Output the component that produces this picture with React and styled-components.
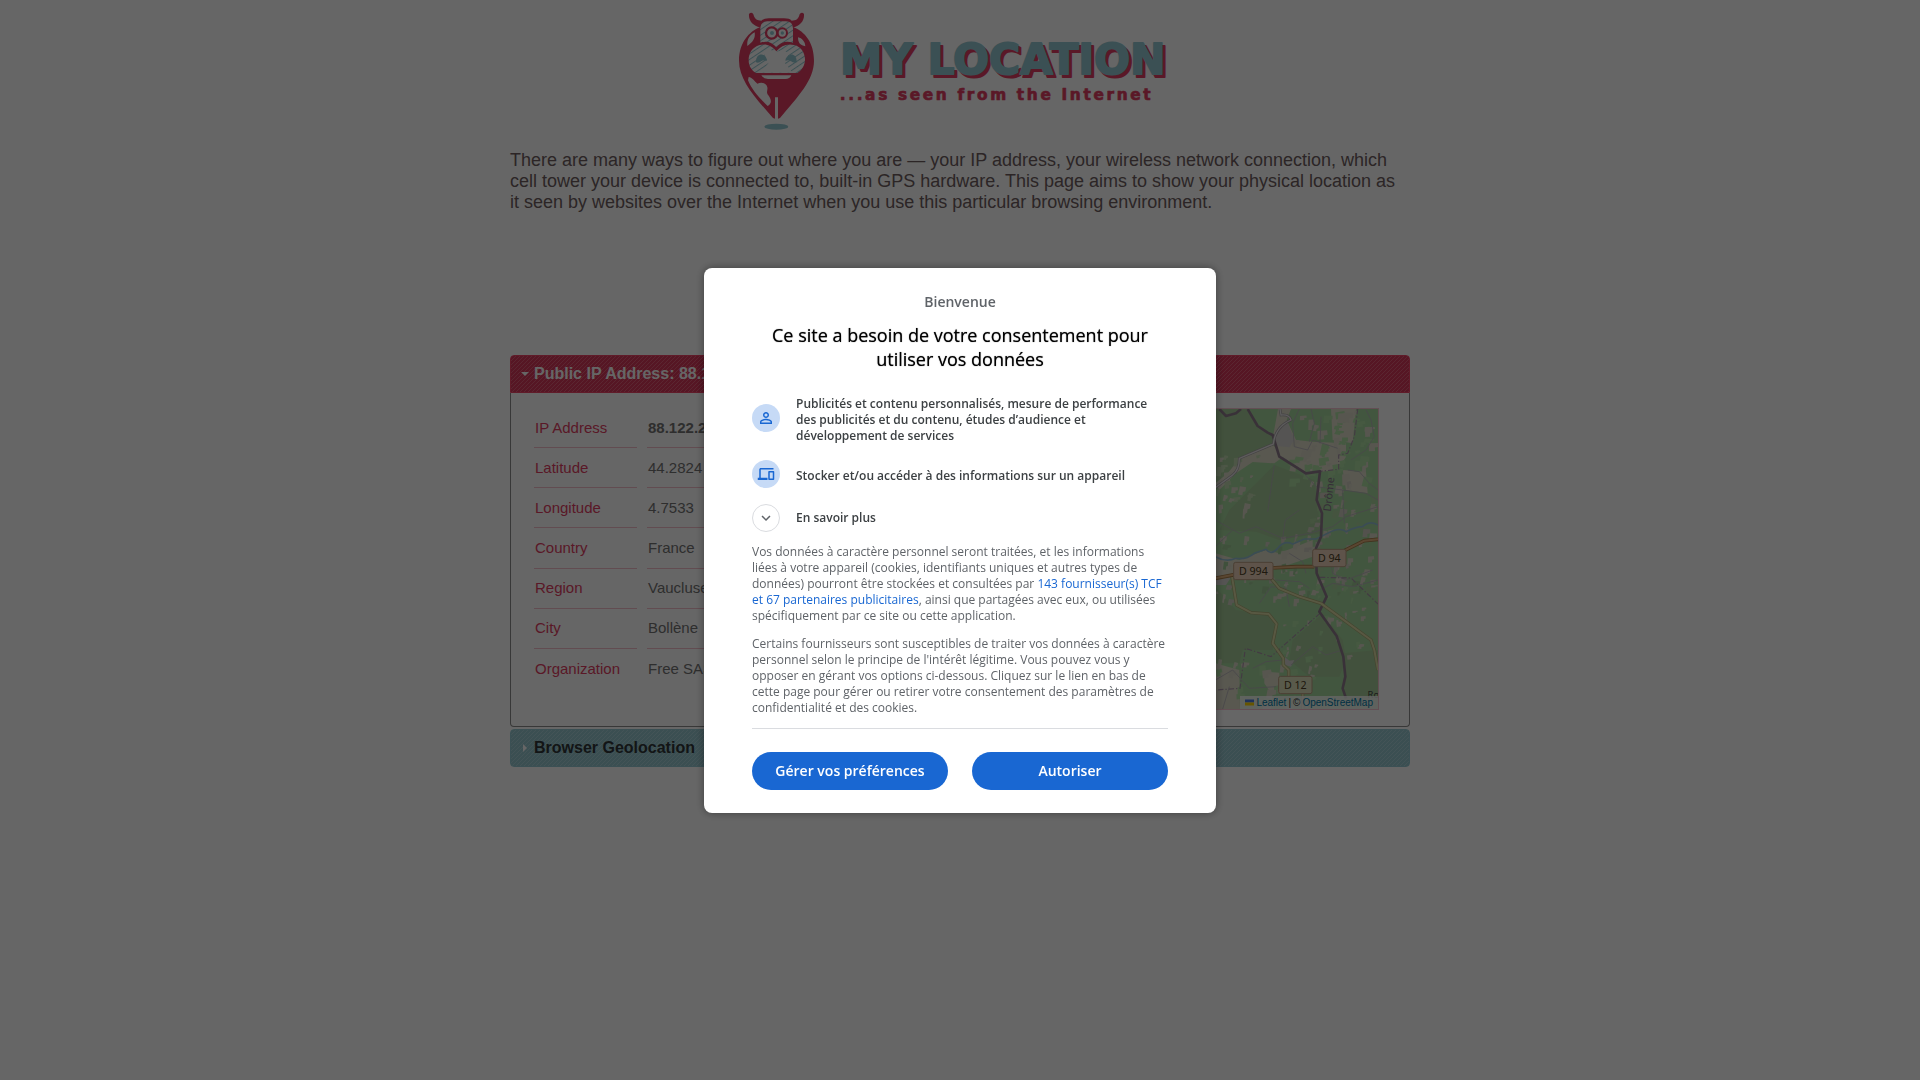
import React from 'react';
import styled, { createGlobalStyle } from 'styled-components';

const GlobalStyle = createGlobalStyle`
  *, *::before, *::after { box-sizing: border-box; }
  body {
    margin: 0;
    background: #fff;
    color: #735f61;
    font-family: "Liberation Sans", Arial, sans-serif;
  }
`;

const red = '#e03e62';
const teal = '#94c9d2';

const Page = styled.main`
  max-width: 900px;
  margin: 0 auto;
`;

const Header = styled.header`
  display: flex;
  justify-content: center;
`;

const LogoSvg = styled.svg`
  display: block;
  width: 442px;
  height: 140px;
`;

const Intro = styled.p`
  margin: 10px 0 142px;
  padding-right: 8px;
  color: #6e5e60;
  font-size: 18px;
  line-height: 21px;
`;

const stripes = (line, base) =>
  `linear-gradient(135deg, ${line} 0 12.5%, ${base} 12.5% 50%, ${line} 50% 62.5%, ${base} 62.5%) 0 0 / 4px 4px`;

const SectionTitle = styled.h3`
  margin: ${(p) => (p.$open ? '0' : '2px 0 0')};
  border: 1px solid ${(p) => (p.$open ? '#f04467' : '#94c9d2')};
  border-radius: ${(p) => (p.$open ? '4px 4px 0 0' : '4px')};
  background: ${(p) => (p.$open ? stripes('#e3607c', '#d8375a') : stripes('#aad2da', '#94c5cd'))};
`;

const SectionButton = styled.button`
  display: flex;
  align-items: center;
  gap: 5px;
  width: 100%;
  height: 36px;
  padding: 0 10px;
  border: 0;
  background: none;
  color: ${(p) => (p.$open ? '#fff' : '#303638')};
  font: bold 16px/20px "Liberation Sans", Arial, sans-serif;
  text-align: left;
`;

const Arrow = styled.svg`
  width: 8px;
  height: 8px;
  fill: #fff;
`;

const Panel = styled.div`
  display: flex;
  justify-content: space-between;
  align-items: flex-start;
  padding: 15px 30px 16px 13px;
  border: 1px solid #8c8c8c;
  border-top: 0;
  border-radius: 0 0 4px 4px;
`;

const Facts = styled.table`
  height: 281px;
  border-collapse: separate;
  border-spacing: 10px 0;
  font-size: 15px;
  line-height: 20px;

  th, td {
    height: 40px;
    padding: 0 1px;
    border-bottom: 1px solid #f5bfca;
    text-align: left;
    font-weight: normal;
  }
  th { width: 103px; color: ${red}; }
  td { width: 200px; color: #737373; }
  tr:first-child td { font-weight: bold; }
  tr:last-child th, tr:last-child td { border-bottom: 0; }
`;

const MapFrame = styled.figure`
  position: relative;
  flex: none;
  margin: 0;
  border: 1px solid #f5c3cf;
`;

const MapSvg = styled.svg`
  display: block;
  width: 400px;
  height: 300px;
`;

const Attribution = styled.figcaption`
  position: absolute;
  right: 0;
  bottom: 0;
  display: flex;
  align-items: center;
  gap: 2px;
  padding: 0 5px;
  background: rgba(255, 255, 255, 0.8);
  color: #333;
  font-size: 10px;
  line-height: 13px;

  a { color: #0078a8; text-decoration: none; }
  svg { width: 9px; height: 7px; }
`;

const Backdrop = styled.div`
  position: fixed;
  inset: 0;
  display: flex;
  align-items: center;
  justify-content: center;
  background: rgba(0, 0, 0, 0.6);
`;

const Dialog = styled.section`
  width: 512px;
  padding: 23px 48px;
  border-radius: 8px;
  background: #fff;
  box-shadow: 0 0 8px rgba(0, 0, 0, 0.4);
  color: #5f6368;
  font-family: "Open Sans", sans-serif;
`;

const Welcome = styled.p`
  margin: 0 0 10px;
  font-size: 14px;
  font-weight: 600;
  line-height: 22px;
  text-align: center;
`;

const DialogTitle = styled.h1`
  margin: 0 0 21px;
  color: #000;
  font-size: 18px;
  font-weight: 500;
  line-height: 24px;
  text-align: center;
  text-shadow: 0 0 1px rgba(0, 0, 0, 0.7);
`;

const Purposes = styled.ul`
  display: flex;
  flex-direction: column;
  gap: 16px;
  margin: 0 0 12px;
  padding: 0;
  list-style: none;
`;

const Purpose = styled.li`
  display: flex;
  align-items: center;
  gap: 16px;
`;

const PurposeText = styled.span`
  padding-top: ${(p) => (p.$plain ? '0' : '4px')};
  color: #3c4043;
  font-size: 12px;
  font-weight: 600;
  line-height: 16px;
`;

const IconDisc = styled.span`
  display: flex;
  align-items: center;
  justify-content: center;
  flex: none;
  width: 28px;
  height: 28px;
  border-radius: 50%;
  background: #c6daf6;

  svg { width: 18px; height: 18px; fill: #1967d2; }
`;

const MoreButton = styled.button`
  display: flex;
  align-items: center;
  gap: 16px;
  padding: 0;
  border: 0;
  background: none;
  font-family: inherit;
`;

const ChevronDisc = styled(IconDisc)`
  border: 1px solid #dadce0;
  background: #fff;

  svg { fill: #5f6368; }
`;

const Legal = styled.p`
  margin: 0 0 12px;
  font-size: 12px;
  line-height: 16px;

  a { color: #1967d2; text-decoration: none; }
`;

const Actions = styled.div`
  display: grid;
  grid-template-columns: 1fr 1fr;
  gap: 24px;
  padding-top: 23px;
  border-top: 1px solid #dadce0;
`;

const ActionButton = styled.button`
  height: 38px;
  padding: 0;
  border: 0;
  border-radius: 19px;
  background: #1967d2;
  color: #fff;
  font: 600 14px/20px "Open Sans", sans-serif;
`;

function Logo() {
  return (
    <LogoSvg viewBox="57 0 1326 420" role="img" aria-label="My Location">
      <defs>
        <pattern id="hatch" width="14" height="14" patternUnits="userSpaceOnUse" patternTransform="rotate(-34)">
          <rect width="14" height="14" fill="#fff" />
          <rect width="14" height="3" fill={teal} />
        </pattern>
      </defs>
      <path fill={red} d="M57 182 C57 128 88 94 120 82 C100 78 85 62 87 42 C92 36 100 38 101 46 C105 58 112 62 124 62 Q132 54 150 55 H188 Q208 54 215 62 C228 62 234 58 238 46 C239 38 248 36 252 42 C254 62 240 78 220 82 C254 94 282 128 282 182 C282 240 235 288 180 354 L174 356 V292 H165 V356 L159 354 C105 292 57 240 57 182Z" />
      <path fill="#fff" d="M104 97 C106 112 102 124 82 138 C80 120 88 106 104 97Z M234 112 C246 114 256 126 256 139 C242 136 234 130 234 112Z" />
      <path fill="url(#hatch)" d="M121 128 V85 Q122 64 142 64 H198 Q218 64 219 85 V128 Q188 118 169 142 Q150 118 121 128Z" />
      <path fill="url(#hatch)" d="M169 154 C156 136 137 130 119 135 C96 142 86 160 86 180 C86 200 96 212 108 219 H232 C246 211 255 196 255 178 C255 156 240 138 222 135 C201 130 183 137 169 154Z" />
      <path fill="#fff" d="M169 156 L150 149 L131 160 L146 188 L124 218 H218 L194 188 L207 160 L188 149Z" />
      <circle cx="155" cy="99" r="17" fill="#fff" stroke={red} strokeWidth="7" />
      <circle cx="187" cy="99" r="14" fill="#fff" stroke={red} strokeWidth="6" />
      <circle cx="156" cy="99" r="6" fill={teal} />
      <circle cx="187" cy="99" r="5" fill={teal} />
      <path fill={teal} d="M108 187 C107 170 117 161 128 164 C137 167 141 174 140 183 Q130 178 124 184 Q116 190 108 187Z M230 187 C231 171 222 162 211 164 C202 167 196 174 196 182 Q207 178 213 184 Q221 190 230 187Z" />
      <path fill="#fff" d="M124 226 H214 Q210 237 196 237 H144 Q130 237 124 226Z" />
      <path fill="#fff" d="M86 231 C96 232 102 242 112 251 C126 244 140 250 142 262 C144 270 137 276 145 286 C153 296 158 310 143 318 C120 296 94 268 84 241Z" />
      <ellipse cx="169" cy="380" rx="36" ry="9" fill={teal} />
      <g fontFamily='"DejaVu Sans", sans-serif' fontWeight="bold" fontSize="127" strokeWidth="6" strokeLinejoin="round">
        <text x="369" y="231" fill={red} stroke={red}>MY LOCATION</text>
        <text x="360" y="222" fill={teal} stroke={teal}>MY LOCATION</text>
      </g>
      <text x="359" y="299" fill={red} stroke={red} strokeWidth="2" strokeLinejoin="round" fontFamily='"DejaVu Sans", sans-serif' fontWeight="bold" fontSize="46" letterSpacing="8">
        ...as seen from the Internet
      </text>
    </LogoSvg>
  );
}

/* Deterministic scatter of small fields over the woodland */
function makeFields(count, seed, colors, x0, y0, w, h, size) {
  let s = seed;
  const rnd = () => {
    s = (s * 16807) % 2147483647;
    return s / 2147483647;
  };
  return Array.from({ length: count }, () => {
    const x = x0 + rnd() * w;
    const y = y0 + rnd() * h;
    const a = size * (0.4 + rnd());
    const b = size * (0.3 + rnd());
    const k = (rnd() - 0.5) * size;
    return {
      d: `M${x} ${y}l${a} ${-k * 0.4}l${k * 0.3} ${b * 0.6}l${-a * 0.4} ${b * 0.1}l${k * 0.2} ${b * 0.5}l${-a * 0.7} ${k * 0.3}Z`,
      fill: colors[Math.floor(rnd() * colors.length)],
    };
  });
}

const fields = [
  ...makeFields(60, 71, ['#aedfa3', '#d9d8c6'], 260, 210, 250, 220, 22),
  ...makeFields(60, 991, ['#d9d8c6', '#cfccc0', '#add19e'], 330, 420, 190, 330, 16),
  ...makeFields(70, 37, ['#d9d8c6', '#cfccc0', '#9fc795'], -200, 560, 710, 220, 17),
  ...makeFields(36, 555, ['#d9d8c6', '#aedfa3'], 230, 730, 290, 250, 14),
  ...makeFields(30, 404, ['#d9d8c6', '#aedfa3'], 48, 950, 300, 150, 20),
  ...makeFields(22, 8080, ['#d9d8c6', '#c0d8b0'], 50, 330, 120, 200, 18),
];

const roadLabels = [
  { x: 103, y: 667, w: 118, text: 'D 994', fill: '#ead0b8' },
  { x: 340, y: 628, w: 100, text: 'D 94', fill: '#ead0b8' },
  { x: 238, y: 1009, w: 100, text: 'D 12', fill: '#dfe2bc' },
];

function LocationMap() {
  return (
    <MapFrame>
      <MapSvg viewBox="-664 207 1200 900" role="img" aria-label="Map of the area around Bollène">
        <rect x="-664" y="207" width="1200" height="900" fill="#a6d79d" />
        <path fill="#a5cb98" d="M-664 207H140L175 260L222 285L232 320L125 350L90 400L48 440H-664Z M225 375L345 420L355 500L365 580L240 600L170 575L60 570L90 510L150 450Z M48 740L110 810L220 830L232 880L220 930L130 930L120 970L48 970Z M280 900L370 820L430 900L440 960L420 1010L330 1010L270 960Z M430 940L536 930V1107H440Z" />
        <path fill="#dedbc9" d="M236 207H275L262 240L290 300L340 305L440 310L440 350L415 390L362 395L320 400L275 375L240 345L222 285Z M395 207H470L460 310L400 300Z M125 350L222 315L250 352L225 370L160 366L110 400L60 450L48 430L85 400Z M48 640L120 660L200 630L240 640L340 600L340 650L220 690L48 710Z M430 390L500 395L505 460L440 450Z M195 995L240 998L240 1060L215 1060L195 1030Z M48 970L120 990L122 1107H48Z" />
        {fields.map((f, i) => (
          <path key={i} d={f.d} fill={f.fill} />
        ))}
        <path fill="#d5d1cf" d="M222 285L262 240L285 300L270 322L235 318Z M255 950L270 962L285 960L275 980L258 975Z M48 715L95 712L80 735L48 735Z" />
        <g fill="none" stroke="#b5b1b8" strokeWidth="2.5">
          <path d="M335 207L345 250L330 305M365 230L362 310M300 207L280 250L285 320L325 330L340 300L415 325M250 352L300 385L350 440L430 450L435 550M430 450L500 460L536 480M455 360L500 330L525 290L515 240L500 210" />
          <path d="M48 540L120 580L170 560L250 595L330 580L400 560L440 530L536 500M48 620L100 570M205 515L225 375M250 595L258 540L300 510M445 390L480 395L510 430L536 450" />
          <path d="M230 720L300 725L330 745M360 750L400 730L460 740L536 720M275 975L340 920L380 945L430 930M270 640L310 665L320 700M390 640L400 700L440 720L520 690M180 790L215 740L260 745L270 800" />
          <path d="M48 1020L100 990L150 1045L230 1040M70 1107L90 1040M160 985L200 965L250 960" />
        </g>
        <g fill="none" stroke="#a792a7" strokeWidth="3.5" strokeDasharray="16 6 4 6">
          <path d="M475 207L465 290L445 340L418 345V388L362 394M362 712L455 714L536 792M362 820L215 950L138 925L122 1045L48 1050" />
        </g>
        <path fill="none" stroke="#94bfd2" strokeWidth="5" d="M-200 620L48 650Q80 668 110 655Q140 660 165 640L200 628Q215 648 235 625Q255 600 280 612L315 597L350 597L385 580Q420 560 440 575Q470 560 490 560Q510 540 536 555" />
        <path fill="none" stroke="#8f7c8c" strokeWidth="8" strokeLinejoin="round" d="M60 207L80 228L110 220L125 207M145 207L175 258L205 278L220 285L240 350L320 400L362 394L352 480L368 520L365 590L350 625L352 700L382 770L360 815L412 888L432 950L438 1010L430 1045L440 1075" />
        <path fill="none" stroke="#a7a3a5" strokeWidth="8" d="M-60 520L48 443L100 405Q120 390 120 355L222 312Q228 260 275 240Q270 222 245 225L242 207" />
        <path fill="none" stroke="#e8e6e6" strokeWidth="4" d="M-60 520L48 443L100 405Q120 390 120 355L222 312Q228 260 275 240Q270 222 245 225L242 207" />
        <g fill="none" strokeLinejoin="round">
          <path stroke="#aaa874" strokeWidth="10" d="M98 710L112 795L155 818L208 822L232 852L220 910L252 955V975L268 990V1010M215 715L240 745L300 770L365 790L440 845L515 900L525 930L536 990M310 1060V1107" />
          <path stroke="#dcdca6" strokeWidth="6" d="M98 710L112 795L155 818L208 822L232 852L220 910L252 955V975L268 990V1010M215 715L240 745L300 770L365 790L440 845L515 900L525 930L536 990M310 1060V1107" />
          <path stroke="#a67c48" strokeWidth="11" d="M-200 740L48 715L110 703M215 684L290 680L345 680M435 632L495 602L536 598" />
          <path stroke="#e0b07c" strokeWidth="6" d="M-200 740L48 715L110 703M215 684L290 680L345 680M435 632L495 602L536 598" />
        </g>
        <g fontFamily='"Noto Sans", sans-serif' fontSize="32" textAnchor="middle">
          {roadLabels.map((l) => (
            <g key={l.text}>
              <rect x={l.x} y={l.y} width={l.w} height="52" rx="6" fill={l.fill} stroke="#b99c80" strokeWidth="3" />
              <text x={l.x + l.w / 2} y={l.y + 37} fill="#4b3c24">{l.text}</text>
            </g>
          ))}
          <text transform="translate(400 464) rotate(-84)" fill="#85718a">Drôme</text>
          <text x="522" y="1075" fill="#444" fontSize="28">Ro</text>
        </g>
      </MapSvg>
      <Attribution>
        <svg viewBox="0 0 12 8" aria-hidden="true">
          <path fill="#4C7BE1" d="M0 0h12v4H0z" />
          <path fill="#FFD500" d="M0 4h12v4H0z" />
        </svg>
        <a href="#leaflet">Leaflet</a>
        <span>|</span>
        <span>©</span>
        <a href="#openstreetmap">OpenStreetMap</a>
      </Attribution>
    </MapFrame>
  );
}

const facts = [
  ['IP Address', '88.122.2'],
  ['Latitude', '44.2824'],
  ['Longitude', '4.7533'],
  ['Country', 'France'],
  ['Region', 'Vaucluse'],
  ['City', 'Bollène'],
  ['Organization', 'Free SAS'],
];

function ConsentDialog() {
  return (
    <Backdrop>
      <Dialog role="dialog" aria-modal="true" aria-labelledby="consent-title" lang="fr">
        <Welcome>Bienvenue</Welcome>
        <DialogTitle id="consent-title">Ce site a besoin de votre consentement pour utiliser vos données</DialogTitle>
        <Purposes>
          <Purpose>
            <IconDisc>
              <svg viewBox="0 0 24 24" aria-hidden="true">
                <path d="M12 5.9a2.1 2.1 0 1 1 0 4.2 2.1 2.1 0 0 1 0-4.2m0 9c2.97 0 6.1 1.46 6.1 2.1v1.1H5.900V17c0-.64 3.130-2.100 6.100-2.100M12 4C9.790 4 8 5.790 8 8s1.790 4 4 4 4-1.790 4-4-1.790-4-4-4zm0 9c-2.670 0-8 1.340-8 4v3h16v-3c0-2.660-5.330-4-8-4z" />
              </svg>
            </IconDisc>
            <PurposeText>
              Publicités et contenu personnalisés, mesure de performance des publicités et du contenu, études d’audience et développement de services
            </PurposeText>
          </Purpose>
          <Purpose>
            <IconDisc>
              <svg viewBox="0 0 24 24" aria-hidden="true">
                <path d="M5 6h17V4H5c-1.100 0-2 .9-2 2v11H1v3h13v-3H5V6zm17 2h-6c-.55 0-1 .45-1 1v10c0 .55.45 1 1 1h6c.55 0 1-.45 1-1V9c0-.55-.45-1-1-1zm-1 10h-4v-8h4v8z" />
              </svg>
            </IconDisc>
            <PurposeText>Stocker et/ou accéder à des informations sur un appareil</PurposeText>
          </Purpose>
          <Purpose>
            <MoreButton type="button" aria-expanded="false">
              <ChevronDisc>
                <svg viewBox="0 0 24 24" aria-hidden="true">
                  <path d="M7.410 8.590L12 13.170l4.590-4.580L18 10l-6 6-6-6z" />
                </svg>
              </ChevronDisc>
              <PurposeText $plain>En savoir plus</PurposeText>
            </MoreButton>
          </Purpose>
        </Purposes>
        <Legal>
          Vos données à caractère personnel seront traitées, et les informations liées à votre appareil (cookies, identifiants uniques et autres types de données) pourront être stockées et consultées par{' '}
          <a href="#vendors">143 fournisseur(s) TCF et 67 partenaires publicitaires</a>, ainsi que partagées avec eux, ou utilisées spécifiquement par ce site ou cette application.
        </Legal>
        <Legal>
          Certains fournisseurs sont susceptibles de traiter vos données à caractère personnel selon le principe de l'intérêt légitime. Vous pouvez vous y opposer en gérant vos options ci-dessous. Cliquez sur le lien en bas de cette page pour gérer ou retirer votre consentement des paramètres de confidentialité et des cookies.
        </Legal>
        <Actions>
          <ActionButton type="button">Gérer vos préférences</ActionButton>
          <ActionButton type="button">Autoriser</ActionButton>
        </Actions>
      </Dialog>
    </Backdrop>
  );
}

export default function App() {
  return (
    <>
      <GlobalStyle />
      <Page>
        <Header>
          <Logo />
        </Header>
        <Intro>
          There are many ways to figure out where you are — your IP address, your wireless network connection, which cell tower your device is connected to, built-in GPS hardware. This page aims to show your physical location as it seen by websites over the Internet when you use this particular browsing environment.
        </Intro>
        <SectionTitle $open>
          <SectionButton $open type="button" aria-expanded="true">
            <Arrow viewBox="0 0 8 8" aria-hidden="true"><path d="M0 2h8L4 6z" /></Arrow>
            Public IP Address: 88.122.2
          </SectionButton>
        </SectionTitle>
        <Panel>
          <Facts>
            <tbody>
              {facts.map(([name, value]) => (
                <tr key={name}>
                  <th scope="row">{name}</th>
                  <td>{value}</td>
                </tr>
              ))}
            </tbody>
          </Facts>
          <LocationMap />
        </Panel>
        <SectionTitle>
          <SectionButton type="button" aria-expanded="false">
            <Arrow viewBox="0 0 8 8" aria-hidden="true"><path d="M2 0v8l4-4z" /></Arrow>
            Browser Geolocation
          </SectionButton>
        </SectionTitle>
      </Page>
      <ConsentDialog />
    </>
  );
}
